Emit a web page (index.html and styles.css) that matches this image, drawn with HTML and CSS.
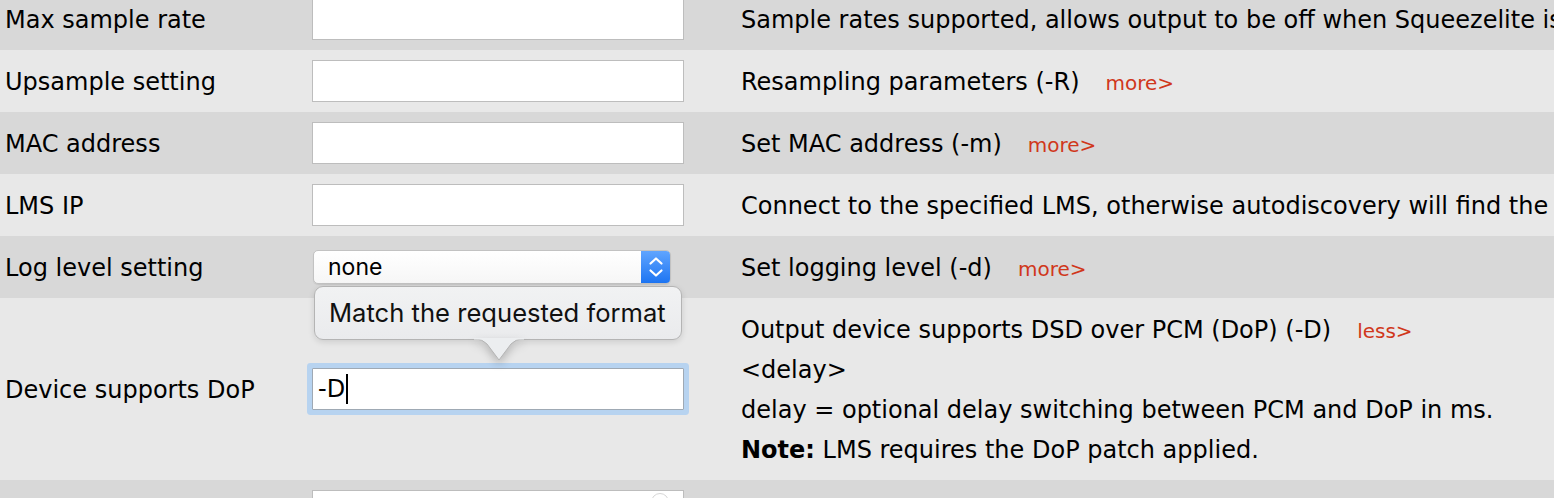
FILE: index.html
```html
<!DOCTYPE html>
<html>
<head>
<meta charset="utf-8">
<link rel="stylesheet" href="styles.css">
</head>
<body>
<div class="settings">
  <div class="row dark">
    <div class="label">Max sample rate</div>
    <div class="field"><div class="input"></div></div>
    <div class="desc">Sample rates supported, allows output to be off when Squeezelite is idle (-r)</div>
  </div>
  <div class="row light">
    <div class="label">Upsample setting</div>
    <div class="field"><div class="input"></div></div>
    <div class="desc">Resampling parameters (-R)<span class="more">more&gt;</span></div>
  </div>
  <div class="row dark">
    <div class="label">MAC address</div>
    <div class="field"><div class="input"></div></div>
    <div class="desc">Set MAC address (-m)<span class="more">more&gt;</span></div>
  </div>
  <div class="row light">
    <div class="label">LMS IP</div>
    <div class="field"><div class="input"></div></div>
    <div class="desc">Connect to the specified LMS, otherwise autodiscovery will find the server (-s)</div>
  </div>
  <div class="row dark">
    <div class="label">Log level setting</div>
    <div class="field">
      <div class="select">
        <span class="select-value">none</span>
        <span class="stepper">
          <svg width="30" height="34" viewBox="0 0 30 34"><path d="M9.5 13.5 L15 8.5 L20.5 13.5 M9.5 20.5 L15 25.5 L20.5 20.5" fill="none" stroke="#fff" stroke-width="2.2" stroke-linecap="round" stroke-linejoin="round"/></svg>
        </span>
      </div>
    </div>
    <div class="desc">Set logging level (-d)<span class="more">more&gt;</span></div>
  </div>
  <div class="row light">
    <div class="label">Device supports DoP</div>
    <div class="field">
      <div class="input focused"><span class="value">-D</span><span class="caret"></span></div>
      <div class="tooltip">
        <span>Match the requested format</span>
        <svg class="tip-arrow" width="50" height="26" viewBox="0 0 50 26"><path d="M0 1 L2 1 Q8 1 13 6 L25 22 L37 6 Q42 1 48 1 L50 1" fill="#eceef0" stroke="#b4b4b4" stroke-width="1"/><rect x="0" y="0" width="50" height="1.5" fill="#eceef0"/></svg>
      </div>
    </div>
    <div class="desc multi">
      <div class="line">Output device supports DSD over PCM (DoP) (-D)<span class="more">less&gt;</span></div>
      <div class="line">&lt;delay&gt;</div>
      <div class="line">delay = optional delay switching between PCM and DoP in ms.</div>
      <div class="line"><b>Note:</b> LMS requires the DoP patch applied.</div>
    </div>
  </div>
  <div class="row dark">
    <div class="label"></div>
    <div class="field"><div class="input"><span class="spin"></span></div></div>
    <div class="desc"></div>
  </div>
</div>
</body>
</html>
```

FILE: styles.css
```css
html, body {
  margin: 0;
  padding: 0;
  overflow: hidden;
  background: #e8e8e8;
}
body {
  width: 1554px;
  height: 498px;
  font-family: "DejaVu Sans", Verdana, sans-serif;
  font-size: 24px;
  color: #000;
}
.settings {
  margin-top: -12px;
}
.row {
  display: grid;
  grid-template-columns: 312px 372px minmax(0, 1fr);
  align-items: center;
  padding: 10px 0;
  line-height: 40px;
}
.dark { background: #d8d8d8; }
.light { background: #e8e8e8; }
.label {
  box-sizing: border-box;
  height: 42px;
  padding-left: 5px;
  padding-top: 2px;
  white-space: nowrap;
}
.field {
  position: relative;
  height: 42px;
  display: flex;
  align-items: center;
}
.input {
  box-sizing: border-box;
  width: 372px;
  height: 42px;
  background: #fff;
  border: 1px solid #bdbdbd;
  display: flex;
  align-items: center;
  position: relative;
}
.input.focused {
  border-color: #9fa9b4;
  box-shadow: 0 0 0 5px #b7d3f0;
  border-radius: 1px;
}
.value {
  font-family: "DejaVu Sans", sans-serif;
  font-size: 24px;
  padding-left: 5px;
}
.caret {
  width: 2px;
  height: 30px;
  background: #000;
  margin-left: 1px;
}
.spin {
  position: absolute;
  right: 14px;
  top: 2px;
  width: 16px;
  height: 16px;
  border-radius: 50%;
  border: 1px solid #d6d6d6;
}
.select {
  box-sizing: border-box;
  margin-left: 1px;
  width: 358px;
  height: 34px;
  border-radius: 5px;
  border: 1px solid #c2c2c2;
  background: linear-gradient(#ffffff, #f6f6f6);
  display: flex;
  align-items: center;
  justify-content: space-between;
  overflow: hidden;
  box-shadow: 0 1px 1px rgba(0,0,0,0.08);
}
.select-value {
  font-family: Inter, "Liberation Sans", sans-serif;
  font-size: 23px;
  padding-left: 14px;
  line-height: 32px;
}
.stepper {
  width: 30px;
  height: 34px;
  margin: -1px -1px -1px 0;
  background: linear-gradient(#62a6ff, #1b73f2);
  display: flex;
}
.tooltip {
  position: absolute;
  left: 2px;
  top: -82px;
  box-sizing: border-box;
  width: 368px;
  height: 54px;
  border: 1px solid #b4b4b4;
  border-radius: 9px;
  background: linear-gradient(#f1f2f3, #eaebed);
  box-shadow: 0 2px 6px rgba(0,0,0,0.12);
  font-family: Inter, "Liberation Sans", sans-serif;
  font-size: 25.6px;
  line-height: 52px;
  padding-left: 14px;
  white-space: nowrap;
  color: #111;
}
.tip-arrow {
  position: absolute;
  left: 159px;
  top: 51px;
  filter: drop-shadow(0 4px 4px rgba(0,0,0,0.22));
}
.desc {
  box-sizing: border-box;
  height: 42px;
  padding-left: 57px;
  padding-top: 2px;
  white-space: nowrap;
  overflow: hidden;
}
.desc.multi {
  height: auto;
  padding-top: 2px;
  padding-bottom: 0;
}
.line {
  height: 40px;
}
.more {
  color: #d0371b;
  font-size: 20px;
  margin-left: 26px;
}
```
